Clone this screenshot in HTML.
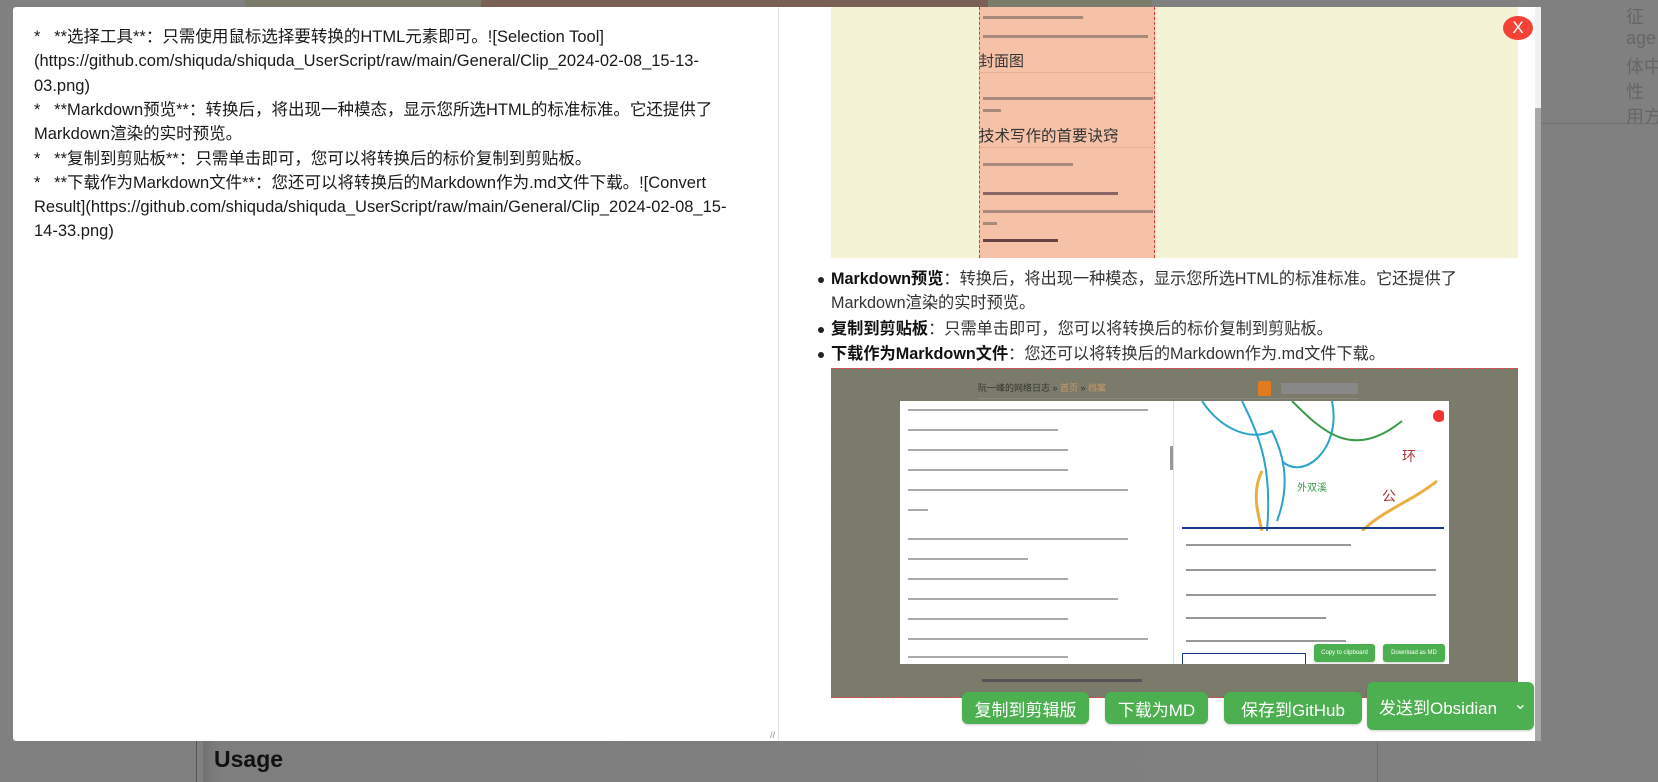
<!DOCTYPE html>
<html><head><meta charset="utf-8">
<style>
*{margin:0;padding:0;box-sizing:border-box}
body{width:1658px;height:782px;overflow:hidden;background:#808080;position:relative;font-family:"Liberation Sans","Noto Sans CJK SC",sans-serif}
.a{position:absolute}
.bgt{position:absolute;left:1626px;color:#666;font-size:18px;white-space:nowrap}
.lt{position:absolute;left:34px;font-size:16.5px;color:#1a1a1a;white-space:nowrap;line-height:24px}
.bl{position:absolute;left:831px;font-size:16.2px;color:#333;white-space:nowrap;line-height:24px}
.dot{position:absolute;left:-13px;top:10px;width:6px;height:6px;border-radius:50%;background:#222}
.btn{position:absolute;background:#4caf50;color:#fff;border-radius:6px;font-size:17px;display:flex;align-items:center;justify-content:center;box-shadow:0 1px 2px rgba(0,0,0,.2)}
.sl{position:absolute;height:3px;background:#a88a7a}
.gl{position:absolute;height:2px;background:#aaa}
.rl{position:absolute;height:2px;background:#999}
</style></head><body>
<div class="a" style="left:245px;top:0;width:236px;height:8px;background:#7b7b6b"></div>
<div class="a" style="left:481px;top:0;width:507px;height:8px;background:#7a5f55"></div>
<div class="a" style="left:988px;top:0;width:164px;height:8px;background:#7b7b6b"></div>
<div class="bgt" style="top:3px">征</div>
<div class="bgt" style="top:28px">age</div>
<div class="bgt" style="top:53px">体中文</div>
<div class="bgt" style="top:78px">性</div>
<div class="bgt" style="top:103px">用方法</div>
<div class="a" style="left:1541px;top:123px;width:117px;height:1px;background:#6f6f6f"></div>
<div class="a" style="left:196px;top:740px;width:1px;height:42px;background:#555"></div>
<div class="a" style="left:203px;top:740px;width:1400px;height:42px;background:linear-gradient(90deg,#727272,#7e7e7e 16px,#808080)"></div>
<div class="a" style="left:1377px;top:740px;width:1px;height:42px;background:#6e6e6e"></div>
<div class="a" style="left:214px;top:746px;font-size:23px;font-weight:bold;color:#111">Usage</div>

<div class="a" style="left:13px;top:7px;width:1528px;height:734px;background:#fff;border-radius:3px;overflow:hidden"></div>
<div class="a" style="left:778px;top:7px;width:1px;height:734px;background:#e4e4e4"></div>
<div class="a" style="left:770px;top:730px;font-size:9px;color:#888">//</div>
<div class="lt" style="top:25px">*&nbsp;&nbsp; **选择工具**：只需使用鼠标选择要转换的HTML元素即可。![Selection Tool]</div>
<div class="lt" style="top:49px">(https://github.com/shiquda/shiquda_UserScript/raw/main/General/Clip_2024-02-08_15-13-</div>
<div class="lt" style="top:74px">03.png)</div>
<div class="lt" style="top:98px">*&nbsp;&nbsp; **Markdown预览**：转换后，将出现一种模态，显示您所选HTML的标准标准。它还提供了</div>
<div class="lt" style="top:122px">Markdown渲染的实时预览。</div>
<div class="lt" style="top:147px">*&nbsp;&nbsp; **复制到剪贴板**：只需单击即可，您可以将转换后的标价复制到剪贴板。</div>
<div class="lt" style="top:171px">*&nbsp;&nbsp; **下载作为Markdown文件**：您还可以将转换后的Markdown作为.md文件下载。![Convert</div>
<div class="lt" style="top:195px">Result](https://github.com/shiquda/shiquda_UserScript/raw/main/General/Clip_2024-02-08_15-</div>
<div class="lt" style="top:219px">14-33.png)</div>

<div class="a" style="left:831px;top:7px;width:687px;height:251px;background:#f5f3d6"></div>
<div class="a" style="left:979px;top:7px;width:176px;height:251px;background:#f5c2a8;border-left:1px dashed #e33;border-right:1px dashed #e33"></div>
<div class="sl" style="left:983px;top:16px;width:100px"></div>
<div class="sl" style="left:983px;top:35px;width:165px"></div>
<div class="a" style="left:979px;top:50px;font-size:15px;color:#333">封面图</div>
<div class="a" style="left:979px;top:72px;width:176px;height:1px;background:#e8b196"></div>
<div class="sl" style="left:983px;top:97px;width:170px"></div>
<div class="sl" style="left:983px;top:109px;width:18px"></div>
<div class="a" style="left:979px;top:124px;font-size:15.5px;color:#333">技术写作的首要诀窍</div>
<div class="a" style="left:979px;top:147px;width:176px;height:1px;background:#e8b196"></div>
<div class="sl" style="left:983px;top:163px;width:90px"></div>
<div class="sl" style="left:983px;top:192px;width:135px;background:#866"></div>
<div class="sl" style="left:983px;top:210px;width:170px"></div>
<div class="sl" style="left:983px;top:222px;width:14px"></div>
<div class="sl" style="left:983px;top:239px;width:75px;background:#644"></div>

<div class="bl" style="top:267px"><span class="dot"></span><b style="color:#111">Markdown预览</b>：转换后，将出现一种模态，显示您所选HTML的标准标准。它还提供了</div>
<div class="bl" style="top:291px">Markdown渲染的实时预览。</div>
<div class="bl" style="top:317px"><span class="dot"></span><b style="color:#111">复制到剪贴板</b>：只需单击即可，您可以将转换后的标价复制到剪贴板。</div>
<div class="bl" style="top:342px"><span class="dot"></span><b style="color:#111">下载作为Markdown文件</b>：您还可以将转换后的Markdown作为.md文件下载。</div>

<div class="a" style="left:831px;top:368px;width:687px;height:330px;background:#7b7b6b;border:1px dashed #e44"></div>
<div class="a" style="left:978px;top:381px;font-size:9px;color:#333">阮一峰的网络日志 » <span style="color:#c96">首页</span> » <span style="color:#c96">档案</span></div>
<div class="a" style="left:1258px;top:381px;width:13px;height:15px;background:#e07b20;border-radius:2px"></div>
<div class="a" style="left:1281px;top:383px;width:77px;height:11px;background:#888"></div>
<div class="a" style="left:978px;top:398px;width:380px;height:1px;background:#8a8a7a"></div>
<div class="a" style="left:900px;top:401px;width:549px;height:263px;background:#fff"></div>
<div class="gl" style="left:908px;top:409px;width:240px"></div>
<div class="gl" style="left:908px;top:429px;width:150px"></div>
<div class="gl" style="left:908px;top:449px;width:160px"></div>
<div class="gl" style="left:908px;top:469px;width:160px"></div>
<div class="gl" style="left:908px;top:489px;width:220px"></div>
<div class="gl" style="left:908px;top:509px;width:20px"></div>
<div class="gl" style="left:908px;top:538px;width:220px"></div>
<div class="gl" style="left:908px;top:558px;width:120px"></div>
<div class="gl" style="left:908px;top:578px;width:160px"></div>
<div class="gl" style="left:908px;top:598px;width:210px"></div>
<div class="gl" style="left:908px;top:618px;width:160px"></div>
<div class="gl" style="left:908px;top:638px;width:240px"></div>
<div class="gl" style="left:908px;top:656px;width:160px"></div>
<div class="a" style="left:1170px;top:446px;width:3px;height:24px;background:#999"></div>
<div class="a" style="left:1173px;top:401px;width:1px;height:263px;background:#ddd"></div>
<svg class="a" style="left:1182px;top:401px" width="262" height="130" viewBox="0 0 262 130">
<path d="M20 0 C40 30 70 40 90 30 C100 50 110 80 95 120" stroke="#2aa3c9" stroke-width="2" fill="none"/>
<path d="M60 0 C80 40 90 70 85 130" stroke="#2aa3c9" stroke-width="2" fill="none"/>
<path d="M150 0 C160 50 120 80 100 60" stroke="#2aa3c9" stroke-width="2" fill="none"/>
<path d="M110 0 C140 30 170 60 220 20" stroke="#3a9b4a" stroke-width="2" fill="none"/>
<path d="M255 80 C230 100 200 110 180 130" stroke="#e8b040" stroke-width="3" fill="none"/>
<path d="M80 70 C70 90 75 110 80 130" stroke="#e8b040" stroke-width="3" fill="none"/>
<path d="M0 127 L262 127" stroke="#1a3a8a" stroke-width="2"/>
<text x="220" y="60" font-size="14" fill="#a33">环</text><text x="200" y="100" font-size="14" fill="#a33">公</text>
<text x="115" y="90" font-size="10" fill="#3a9b4a">外双溪</text>
<circle cx="257" cy="15" r="6" fill="#e33"/>
</svg>
<div class="rl" style="left:1186px;top:544px;width:165px"></div>
<div class="rl" style="left:1186px;top:569px;width:250px"></div>
<div class="rl" style="left:1186px;top:594px;width:250px"></div>
<div class="rl" style="left:1186px;top:617px;width:140px"></div>
<div class="rl" style="left:1186px;top:640px;width:160px"></div>
<div class="a" style="left:1182px;top:653px;width:124px;height:11px;border:1px solid #1a3a8a;border-bottom:none;background:#fff"></div>
<div class="btn" style="left:1314px;top:644px;width:61px;height:18px;font-size:6px;border-radius:3px">Copy to clipboard</div>
<div class="btn" style="left:1383px;top:644px;width:62px;height:18px;font-size:6px;border-radius:3px">Download as MD</div>
<div class="a" style="left:982px;top:679px;width:160px;height:3px;background:#555"></div>

<div class="btn" style="left:962px;top:692px;width:127px;height:32px">复制到剪辑版</div>
<div class="btn" style="left:1105px;top:692px;width:103px;height:32px">下载为MD</div>
<div class="btn" style="left:1224px;top:692px;width:138px;height:32px">保存到GitHub</div>
<div class="btn" style="left:1367px;top:682px;width:167px;height:48px;justify-content:flex-start;padding-left:12px">发送到Obsidian<span style="position:absolute;right:7px;top:12px;font-size:16px">⌄</span></div>

<div class="a" style="left:1535px;top:7px;width:6px;height:734px;background:#f1f1f1"></div>
<div class="a" style="left:1535px;top:108px;width:6px;height:633px;background:#a8a8a8"></div>
<div class="a" style="left:1503px;top:16px;width:30px;height:24px;border-radius:50%;background:#f44336;color:#fff;font-size:17px;display:flex;align-items:center;justify-content:center">X</div>
</body></html>
